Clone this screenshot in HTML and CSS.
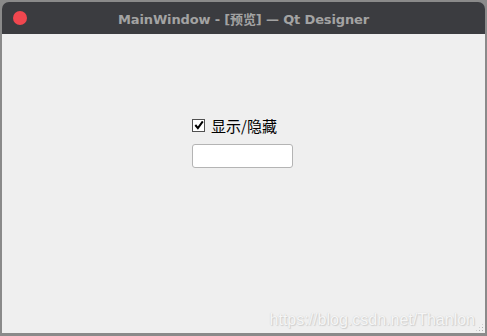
FILE: index.html
```html
<!DOCTYPE html>
<html lang="zh">
<head>
  <meta charset="UTF-8" />
  <title>MainWindow - [预览] — Qt Designer</title>
  <link rel="stylesheet" href="styles.css">
</head>
<body>
  <div class="window">
    <div class="titlebar">
      <span class="close"></span>
      <span class="title">MainWindow - [预览] — Qt Designer</span>
    </div>
    <div class="content">
      <label class="check">
        <span class="box">
          <svg width="10" height="10" viewBox="0 0 10 10"><path d="M1.3 5 L3.9 8.2 L8.8 1.4" fill="none" stroke="#000" stroke-width="2"/></svg>
        </span>
        <span class="check-text">显示/隐藏</span>
      </label>
      <input class="edit" type="text" />
      <div class="watermark">https://blog.csdn.net/Thanlon</div>
      <div class="grip"></div>
    </div>
  </div>
</body>
</html>
```

FILE: styles.css
```css
body {
  margin: 0;
  background-color: #8a8a8a;
  width: 487px;
  height: 336px;
  overflow: hidden;
}
.window {
  margin: 2px 2px 0 2px;
  height: 331px;
  display: flex;
  flex-direction: column;
  border-radius: 7px 7px 0 0;
  overflow: hidden;
}
.titlebar {
  height: 32px;
  flex: none;
  background-color: #3b3c40;
  position: relative;
  display: flex;
  align-items: center;
  justify-content: center;
}
.close {
  position: absolute;
  left: 11px;
  top: 9px;
  width: 14px;
  height: 14px;
  border-radius: 50%;
  background-color: #f0474f;
}
.title {
  color: #a3a3a3;
  font-family: "DejaVu Sans", "Noto Sans CJK SC", sans-serif;
  font-weight: bold;
  font-size: 13px;
  letter-spacing: -0.15px;
}
.content {
  flex: 1;
  background-color: #efefef;
  position: relative;
  padding: 83px 0 0 190px;
  display: flex;
  flex-direction: column;
  align-items: flex-start;
}
.check {
  display: flex;
  align-items: center;
  gap: 6px;
  height: 16px;
}
.box {
  width: 11px;
  height: 11px;
  border: 1px solid #505050;
  background-color: #fff;
  display: flex;
  align-items: center;
  justify-content: center;
}
.check-text {
  font-family: "Noto Sans CJK SC", sans-serif;
  font-size: 15px;
  color: #000;
}
.edit {
  margin-top: 11px;
  width: 101px;
  height: 24px;
  box-sizing: border-box;
  border: 1px solid #b4b4b4;
  border-radius: 3px;
  background-color: #fff;
  padding: 0;
}
.watermark {
  position: absolute;
  right: 10px;
  bottom: 4px;
  font-family: "Liberation Sans", sans-serif;
  font-size: 16px;
  color: #f6f6f6;
  text-shadow: 0 0 1px #c8c8c8, 1px 1px 1px #d0d0d0;
}
.grip {
  position: absolute;
  right: 1px;
  bottom: 1px;
  width: 9px;
  height: 9px;
  background-image: radial-gradient(circle, #b0b0b0 0.8px, transparent 1px);
  background-size: 3px 3px;
  clip-path: polygon(100% 0, 100% 100%, 0 100%);
}
```
